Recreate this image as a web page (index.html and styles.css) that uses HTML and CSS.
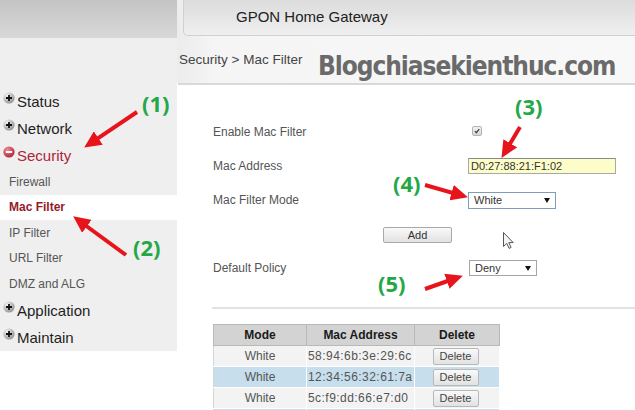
FILE: index.html
```html
<!DOCTYPE html>
<html>
<head>
<meta charset="utf-8">
<title>GPON Home Gateway - Mac Filter</title>
<link rel="stylesheet" href="styles.css">
</head>
<body>
<div class="page">
  <div class="left">
    <div class="brand"></div>
    <nav class="sidebar">
      <div class="item top"><svg class="icon" viewBox="0 0 12 12"><defs><radialGradient id="g1" cx="0.35" cy="0.3" r="0.8"><stop offset="0" stop-color="#f4f4f4"/><stop offset="1" stop-color="#8a8a8a"/></radialGradient></defs><circle cx="6" cy="6" r="5.6" fill="url(#g1)"/><path d="M6 3v6M3 6h6" stroke="#111" stroke-width="1.8"/></svg>Status</div>
      <div class="item top"><svg class="icon" viewBox="0 0 12 12"><circle cx="6" cy="6" r="5.6" fill="url(#g1)"/><path d="M6 3v6M3 6h6" stroke="#111" stroke-width="1.8"/></svg>Network</div>
      <div class="item top active"><svg class="icon" viewBox="0 0 12 12"><defs><radialGradient id="g2" cx="0.35" cy="0.3" r="0.8"><stop offset="0" stop-color="#f08a96"/><stop offset="1" stop-color="#b0182c"/></radialGradient></defs><circle cx="6" cy="6" r="5.6" fill="url(#g2)"/><path d="M2.8 6h6.4" stroke="#fff" stroke-width="2"/></svg>Security</div>
      <div class="item sub">Firewall</div>
      <div class="item sub current">Mac Filter</div>
      <div class="item sub">IP Filter</div>
      <div class="item sub">URL Filter</div>
      <div class="item sub">DMZ and ALG</div>
      <div class="item top"><svg class="icon" viewBox="0 0 12 12"><circle cx="6" cy="6" r="5.6" fill="url(#g1)"/><path d="M6 3v6M3 6h6" stroke="#111" stroke-width="1.8"/></svg>Application</div>
      <div class="item top"><svg class="icon" viewBox="0 0 12 12"><circle cx="6" cy="6" r="5.6" fill="url(#g1)"/><path d="M6 3v6M3 6h6" stroke="#111" stroke-width="1.8"/></svg>Maintain</div>
    </nav>
  </div>
  <div class="right">
    <div class="top-area">
      <header class="header">GPON Home Gateway</header>
      <div class="crumb">Security &gt; Mac Filter</div>
    </div>
    <div class="rule"></div>
    <div class="form">
      <div class="label">Enable Mac Filter</div>
      <div class="ctrl"><span class="check"><svg viewBox="0 0 10 10"><path d="M2.3 5.2l1.9 2 3.6-4.6" fill="none" stroke="#444" stroke-width="1.6"/></svg></span></div>
      <div class="label">Mac Address</div>
      <div class="ctrl"><span class="textbox">D0:27:88:21:F1:02</span></div>
      <div class="label">Mac Filter Mode</div>
      <div class="ctrl"><span class="select mode">White<span class="caret"></span></span></div>
      <div class="add-row"><span class="btn add">Add</span></div>
      <div class="label">Default Policy</div>
      <div class="ctrl"><span class="select policy">Deny<span class="caret"></span></span></div>
    </div>
    <div class="rule low"></div>
    <table class="list">
      <thead>
        <tr><th class="c1">Mode</th><th class="c2">Mac Address</th><th class="c3">Delete</th></tr>
      </thead>
      <tbody>
        <tr><td class="mode">White</td><td class="mac">58:94:6b:3e:29:6c</td><td class="del"><span class="btn">Delete</span></td></tr>
        <tr class="sel"><td class="mode">White</td><td class="mac">12:34:56:32:61:7a</td><td class="del"><span class="btn">Delete</span></td></tr>
        <tr><td class="mode">White</td><td class="mac">5c:f9:dd:66:e7:d0</td><td class="del"><span class="btn">Delete</span></td></tr>
        <tr class="sel"><td class="mode">&nbsp;</td><td class="mac"></td><td class="del"></td></tr>
      </tbody>
    </table>
  </div>

  <div class="overlay">
    <div class="watermark">Blogchiasekienthuc.com</div>
    <svg class="arrows" width="635" height="410" viewBox="0 0 635 410">
      <defs>
        <marker id="head" markerUnits="userSpaceOnUse" markerWidth="17" markerHeight="16" refX="10" refY="8" orient="auto">
          <path d="M0 0L17 8L0 16z" fill="#e8141b"/>
        </marker>
      </defs>
      <g stroke="#e8141b" stroke-width="4" marker-end="url(#head)">
        <line x1="137" y1="112" x2="90" y2="143.6"/>
        <line x1="126" y1="255" x2="78.8" y2="220.5"/>
        <line x1="520" y1="127" x2="505.1" y2="151.9"/>
        <line x1="425" y1="185" x2="461.2" y2="195.4"/>
        <line x1="425" y1="289" x2="456.3" y2="278"/>
      </g>
      <path class="cursor" d="M503.5 232.5v14l3.2-3.1 2.4 5 2-1-2.3-4.8h4.4z" fill="#f4f4f4" stroke="#555" stroke-width="1"/>
    </svg>
    <span class="tag t1">(1)</span>
    <span class="tag t2">(2)</span>
    <span class="tag t3">(3)</span>
    <span class="tag t4">(4)</span>
    <span class="tag t5">(5)</span>
  </div>
</div>
</body>
</html>
```

FILE: styles.css
```css
* { box-sizing: border-box; }
body {
  margin: 0;
  width: 635px;
  height: 410px;
  overflow: hidden;
  background: #fff;
  font-family: "Liberation Sans", Arial, sans-serif;
}
.page {
  position: relative;
  display: flex;
  width: 635px;
  height: 410px;
}
.left {
  width: 177px;
  flex: none;
}
.brand {
  height: 38px;
  background: linear-gradient(#c4c4c4, #d8d8d8);
}
.sidebar {
  height: 313px;
  padding-top: 50px;
  background: #efefef;
}
.item {
  display: flex;
  align-items: center;
}
.item.top {
  height: 27px;
  font-size: 15px;
  color: #1e1e1e;
}
.icon {
  width: 12px;
  height: 12px;
  flex: none;
  margin: 0 2px 7px 3px;
}
.item.active { color: #ae2639; }
.item.sub {
  height: 25.5px;
  padding-left: 9px;
  font-size: 12px;
  color: #555;
}
.item.current {
  background: #fff;
  color: #951b2b;
  font-weight: bold;
}
.right {
  flex: 1;
  min-width: 0;
}
.top-area {
  background: linear-gradient(90deg, #ececec 0, #f5f5f5 40px, #f8f8f8 100%);
  padding-bottom: 13px;
}
.header {
  margin-left: 6px;
  height: 36px;
  padding-left: 52px;
  border: 1px solid #d0d0d0;
  border-top: 0;
  border-right: 0;
  border-bottom-left-radius: 5px;
  background: linear-gradient(#dcdcdc, #efefef);
  font-size: 15px;
  line-height: 33px;
  color: #222;
}
.crumb {
  margin-top: 14px;
  padding-left: 2px;
  font-size: 13.5px;
  line-height: 20px;
  color: #444;
}
.rule {
  height: 2px;
  margin-left: 1px;
  background: #d9d9d9;
}
.rule.low {
  margin-top: 22px;
  margin-left: 35px;
  background: #e2e2e2;
}
.form {
  display: grid;
  grid-template-columns: 255px 1fr;
  grid-auto-rows: 34px;
  align-items: center;
  margin-left: 36px;
  padding-top: 30px;
  font-size: 12px;
  color: #555;
}
.ctrl {
  display: flex;
  align-items: center;
}
.check {
  display: flex;
  width: 10px;
  height: 10px;
  margin-left: 4px;
  margin-top: -2px;
  border: 1px solid #b4b4b4;
  border-radius: 2px;
  background: linear-gradient(#f2f2f2, #d8d8d8);
}
.check svg { width: 8px; height: 8px; }
.textbox {
  display: block;
  width: 148px;
  height: 16px;
  padding-left: 2px;
  border: 1px solid #a8a8a8;
  border-top-color: #8a8a8a;
  background: #fdfdc9;
  font-size: 11px;
  line-height: 14px;
  color: #333;
}
.select {
  display: flex;
  align-items: center;
  justify-content: space-between;
  height: 17px;
  padding: 0 5px 0 5px;
  background: #fff;
  font-size: 11px;
  color: #333;
}
.select.mode {
  width: 88px;
  border: 1px solid #7f9db9;
}
.select.policy {
  width: 68px;
  margin-left: 1px;
  height: 16px;
  border: 1px solid #a5a5a5;
}
.caret {
  width: 0;
  height: 0;
  border-left: 3px solid transparent;
  border-right: 3px solid transparent;
  border-top: 5px solid #111;
}
.add-row {
  grid-column: 1 / 3;
  padding-left: 170px;
  padding-top: 2px;
}
.btn {
  display: inline-flex;
  align-items: center;
  justify-content: center;
  border: 1px solid #a9a9a9;
  border-radius: 2px;
  background: linear-gradient(#f9f9f9, #e2e2e2);
  font-size: 11px;
  color: #333;
}
.btn.add {
  width: 69px;
  height: 16px;
}
.list {
  margin-top: 15px;
  margin-left: 36px;
  width: 286px;
  border-collapse: collapse;
  table-layout: fixed;
  font-size: 12px;
  border: 1px solid #b4b4b4;
}
.list th {
  height: 21px;
  padding: 0;
  background: #d3d3d3;
  border: 1px solid #b9b9b9;
  color: #1a1a1a;
  font-weight: bold;
}
.c1 { width: 93px; }
.c2 { width: 108px; }
.c3 { width: 85px; }
.list td {
  height: 21px;
  padding: 0;
  background: #f3f3f3;
  border: 1px solid #fff;
  border-left-color: #d6d6d6;
  color: #555;
  white-space: nowrap;
  overflow: hidden;
}
.list tr.sel td { background: #c7deed; }
.mode { text-align: center; }
.mac { padding-left: 1px !important; letter-spacing: 0.45px; }
.del { text-align: center; }
.del .btn {
  width: 46px;
  height: 17px;
  margin-left: -3px;
  border-color: #b8b8b8;
  color: #444;
}
.overlay {
  position: absolute;
  left: 0;
  top: 0;
  width: 635px;
  height: 410px;
  pointer-events: none;
}
.arrows {
  position: absolute;
  left: 0;
  top: 0;
}
.watermark {
  position: absolute;
  left: 318px;
  top: 49px;
  font-family: "DejaVu Sans Condensed", "DejaVu Sans", sans-serif;
  font-weight: bold;
  font-size: 26px;
  line-height: 34px;
  letter-spacing: -1.05px;
  color: #6a6a6a;
}
.tag {
  position: absolute;
  font-family: "Open Sans", sans-serif;
  font-weight: bold;
  font-size: 22px;
  line-height: 25px;
  color: #24a847;
}
.t1 { left: 142px; top: 91px; }
.t2 { left: 133px; top: 235px; }
.t3 { left: 515px; top: 94px; }
.t4 { left: 393px; top: 171px; }
.t5 { left: 378px; top: 271px; }
```
